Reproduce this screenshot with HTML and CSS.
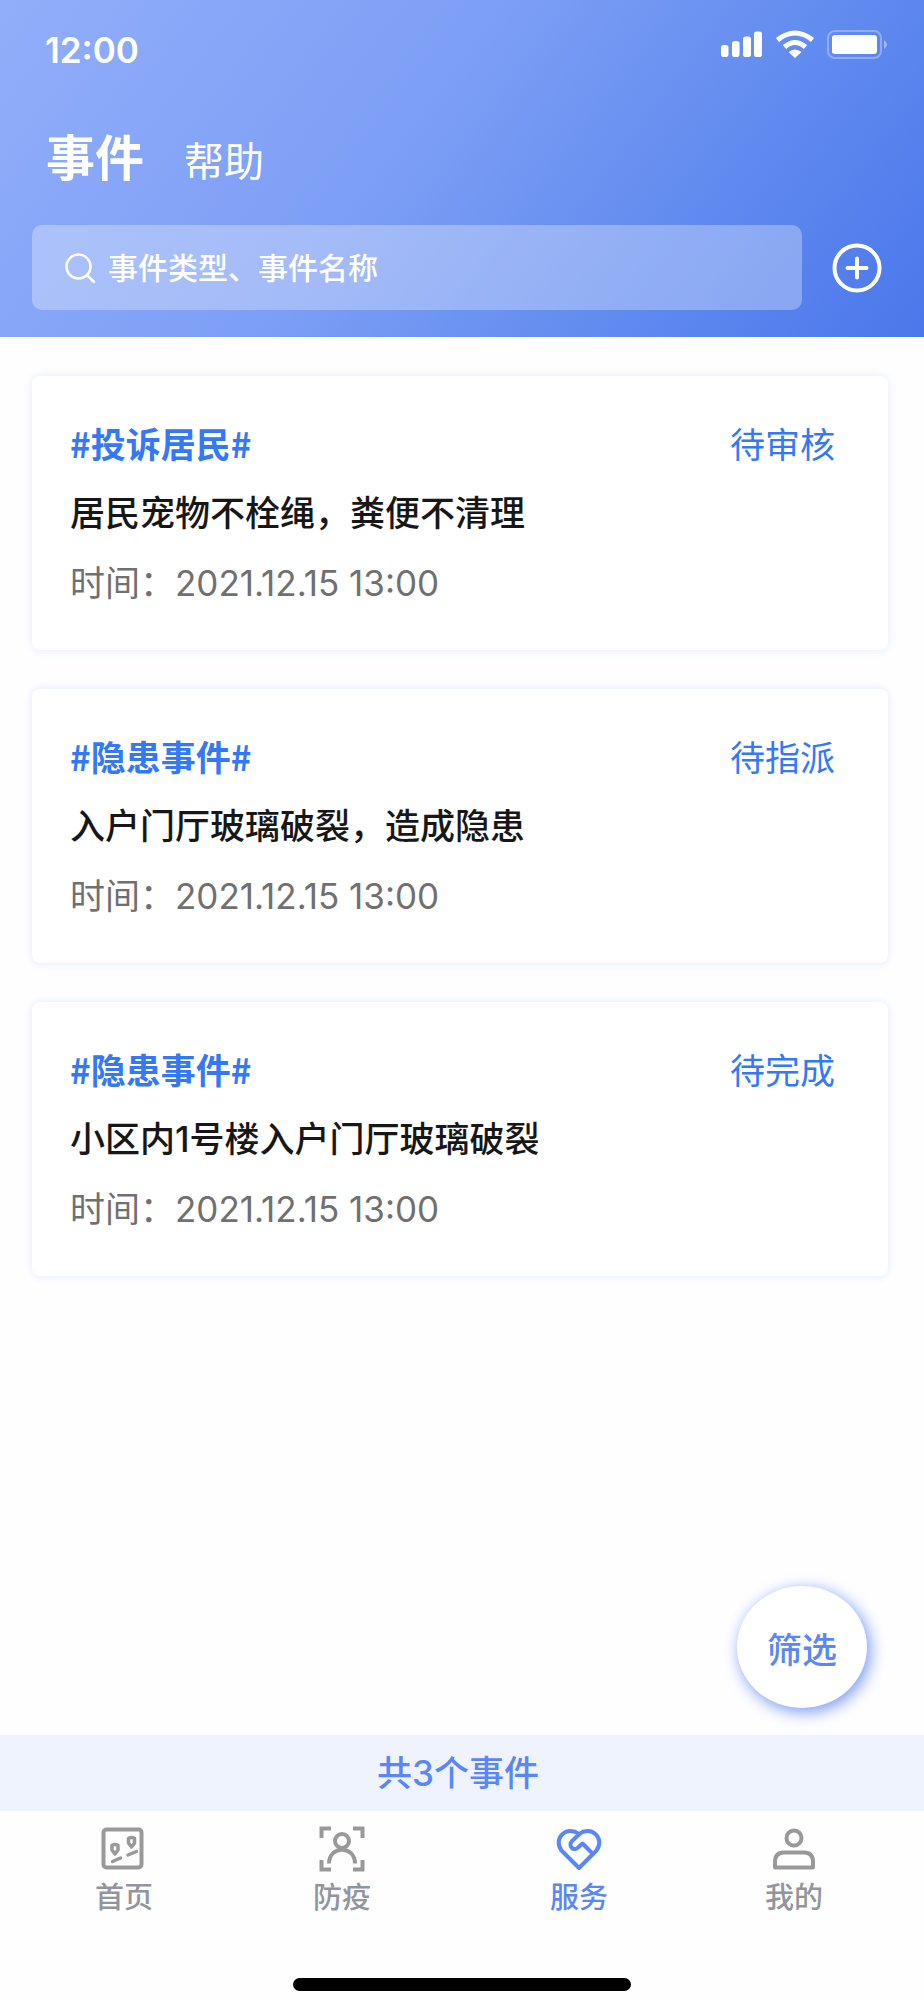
FILE: index.html
```html
<!DOCTYPE html>
<html lang="zh-CN">
<head>
<meta charset="utf-8">
<meta name="viewport" content="width=device-width, initial-scale=1">
<title>事件</title>
<link rel="stylesheet" href="styles.css">
</head>
<body>
<div class="app">
  <header class="header">
    <div class="status-bar">
      <time class="clock">12:00</time>
      <svg class="status-icons" width="168" height="30" viewBox="0 0 168 30" aria-hidden="true">
        <g fill="#fff">
          <rect x="1" y="15" width="7.500" height="12" rx="2.800"/>
          <rect x="12" y="11" width="7.500" height="16" rx="2.800"/>
          <rect x="23" y="6.500" width="8" height="20.500" rx="2.800"/>
          <rect x="34" y="1.500" width="8" height="25.500" rx="2.800"/>
          <path d="M75 28 L68.500 22 Q75 17 81.500 22 Z"/>
        </g>
        <g fill="none" stroke="#fff" stroke-width="5">
          <path d="M57.500 10 Q75 -4 92.500 10"/>
          <path d="M64.500 17 Q75 8 85.500 17"/>
        </g>
        <rect x="108" y="1" width="53" height="27" rx="7" fill="none" stroke="#fff" stroke-opacity=".3" stroke-width="2"/>
        <rect x="112" y="5" width="45" height="19" rx="3" fill="#fff"/>
        <path d="M164 10 Q170 14.500 164 19 Z" fill="#fff" fill-opacity=".4"/>
      </svg>
    </div>
    <nav class="tabs" aria-label="页面">
      <a class="tab tab-active" href="#events">事件</a>
      <a class="tab" href="#help">帮助</a>
    </nav>
    <form class="search-row">
      <label class="search">
        <svg width="30" height="30" viewBox="0 0 30 30" fill="none" stroke="#fff" stroke-width="2.500" stroke-linecap="round" aria-hidden="true">
          <circle cx="13.500" cy="13.500" r="12"/><path d="M22 22l7 7"/>
        </svg>
        <input class="search-input" type="search" placeholder="事件类型、事件名称" aria-label="搜索事件">
      </label>
      <button class="add" type="button" aria-label="新增事件">
        <svg width="50" height="50" viewBox="0 0 50 50" fill="none" stroke="#fff" stroke-width="4" stroke-linecap="round" aria-hidden="true">
          <circle cx="25" cy="25" r="22.500"/><path d="M25 15.500v19M15.500 25h19"/>
        </svg>
      </button>
    </form>
  </header>

  <main class="list" id="events">
    <article class="card">
      <div class="card-head"><span class="tag">#投诉居民#</span><span class="state">待审核</span></div>
      <h2 class="card-title">居民宠物不栓绳，粪便不清理</h2>
      <p class="card-time">时间：2021.12.15 13:00</p>
    </article>
    <article class="card">
      <div class="card-head"><span class="tag">#隐患事件#</span><span class="state">待指派</span></div>
      <h2 class="card-title">入户门厅玻璃破裂，造成隐患</h2>
      <p class="card-time">时间：2021.12.15 13:00</p>
    </article>
    <article class="card">
      <div class="card-head"><span class="tag">#隐患事件#</span><span class="state">待完成</span></div>
      <h2 class="card-title">小区内1号楼入户门厅玻璃破裂</h2>
      <p class="card-time">时间：2021.12.15 13:00</p>
    </article>
  </main>

  <button class="filter" type="button">筛选</button>

  <footer class="footer">
    <p class="summary">共3个事件</p>
    <nav class="nav" aria-label="主导航">
      <a class="nav-item" href="#home">
        <svg width="46" height="46" viewBox="0 0 46 46" fill="none" stroke="currentColor" stroke-width="4" stroke-linecap="round" stroke-linejoin="round" aria-hidden="true">
          <rect x="2.500" y="3.500" width="38" height="38" rx="3"/>
          <path d="M11 19.500Q14 17.500 17 19.500V24L14 28L11 24ZM27.500 12.500Q30.500 10.500 33.500 12.500V17L30.500 21L27.500 17Z" stroke-width="3.500"/>
          <path d="M11.500 35.500l8-3.500M27 29l8.500-3.500" stroke-width="3.500"/>
        </svg>
        <span>首页</span>
      </a>
      <a class="nav-item" href="#health">
        <svg width="46" height="46" viewBox="0 0 46 46" fill="none" stroke="currentColor" stroke-width="4" aria-hidden="true">
          <path d="M12 2.500H2.500V12M34 2.500h9.500V12M12 43.500H2.500V34M34 43.500h9.500V34"/>
          <circle cx="23" cy="15" r="7"/>
          <path d="M10 37.500C10 19 36 19 36 37.500"/>
        </svg>
        <span>防疫</span>
      </a>
      <a class="nav-item nav-active" href="#service" aria-current="page">
        <svg width="46" height="46" viewBox="0 0 46 46" fill="none" stroke="currentColor" stroke-width="4" stroke-linejoin="round" aria-hidden="true">
          <path d="M23 42L5.500 24.500C-3.500 12 11 -1 23 8C35 -1 49.500 12 40.500 24.500Z"/>
          <path d="M24 7.500L16.500 14.500C11 20 18 26 22 21.500L26.500 17.500L36.500 27.500"/>
        </svg>
        <span>服务</span>
      </a>
      <a class="nav-item" href="#me">
        <svg width="46" height="46" viewBox="0 0 46 46" fill="none" stroke="currentColor" stroke-width="4" stroke-linejoin="round" aria-hidden="true">
          <circle cx="23" cy="12" r="7.500"/>
          <path d="M4 41.500V36Q4 26.500 13 26.500H33Q42 26.500 42 36V41.500Z"/>
        </svg>
        <span>我的</span>
      </a>
    </nav>
    <div class="home-indicator"></div>
  </footer>
</div>
</body>
</html>
```

FILE: styles.css
```css
*, *::before, *::after { box-sizing: border-box; }

body {
  margin: 0;
  background: #fefefe;
  color: #171717;
  font-family: Inter, "Noto Sans CJK SC", sans-serif;
}

h2, p { margin: 0; }
a { color: inherit; text-decoration: none; }
button { padding: 0; border: 0; background: none; font: inherit; cursor: pointer; }
svg { display: block; flex: none; }

.app {
  position: relative;
  display: flex;
  flex-direction: column;
  min-height: 100vh;
}

.header {
  padding: 28px 32px 27px;
  color: #fff;
  background: linear-gradient(127deg, #91aefa 0%, #7c9ef5 44%, #608aef 74%, #4b77eb 100%);
}

.status-bar {
  display: flex;
  justify-content: space-between;
  align-items: flex-start;
  padding: 2px 4px 0 13px;
}

.clock { font-size: 35px; font-weight: 600; line-height: 40px; }

.tabs {
  display: flex;
  align-items: baseline;
  gap: 40px;
  padding: 53px 14px 0;
  line-height: 72px;
}

.tab { font-size: 40px; }
.tab-active { font-size: 49px; font-weight: 700; }

.search-row {
  display: flex;
  align-items: center;
  gap: 30px;
  padding: 27px 10px 0 0;
}

.search {
  display: flex;
  flex: 1;
  align-items: center;
  gap: 13px;
  min-width: 0;
  height: 85px;
  padding: 0 33px;
  border-radius: 10px;
  background: rgba(255, 255, 255, .3);
}

.search-input {
  flex: 1;
  min-width: 0;
  padding: 0;
  border: 0;
  outline: 0;
  background: none;
  color: #fff;
  font: 500 30px/44px Inter, "Noto Sans CJK SC", sans-serif;
}

.search-input::placeholder { color: #fff; opacity: 1; }

.list {
  display: flex;
  flex-direction: column;
  gap: 39px;
  padding: 39px 36px 40px 32px;
}

.card {
  padding: 32px 53px 32px 38px;
  border-radius: 8px;
  background: #fff;
  box-shadow: 0 0 8px 1px #e6eefe;
  font-size: 35px;
  line-height: 70px;
}

.card-head {
  display: flex;
  justify-content: space-between;
  align-items: baseline;
  height: 70px;
  color: #3478f6;
}

.tag { font-family: "Noto Sans CJK SC", sans-serif; font-weight: 700; }
.card-title { font-size: 35px; font-weight: 500; }
.card-time { color: #707070; }

.filter {
  position: absolute;
  right: 57px;
  bottom: 292px;
  width: 130px;
  height: 122px;
  border-radius: 50%;
  background: #fff;
  box-shadow: 3px 4px 16px #7697f5;
  color: #5b87f6;
  font-size: 35px;
  font-weight: 500;
}

.footer { margin-top: auto; }

.summary {
  padding-right: 8px;
  background: #eef3fe;
  color: #5b87f6;
  font-size: 35px;
  font-weight: 500;
  line-height: 76px;
  text-align: center;
}

.nav {
  display: grid;
  grid-template-columns: 248fr 188fr 286fr 144fr;
  padding: 15px 58px 0 0;
}

.nav-item {
  display: flex;
  flex-direction: column;
  align-items: center;
  gap: 5px;
  color: #999;
  font-size: 29px;
  font-weight: 500;
  line-height: 42px;
}

.nav-item span { color: #91959d; }
.nav-active, .nav-active span { color: #5b87f6; }

.home-indicator {
  width: 338px;
  height: 13px;
  margin: 59px auto 9px;
  border-radius: 7px;
  background: #000;
}
```
